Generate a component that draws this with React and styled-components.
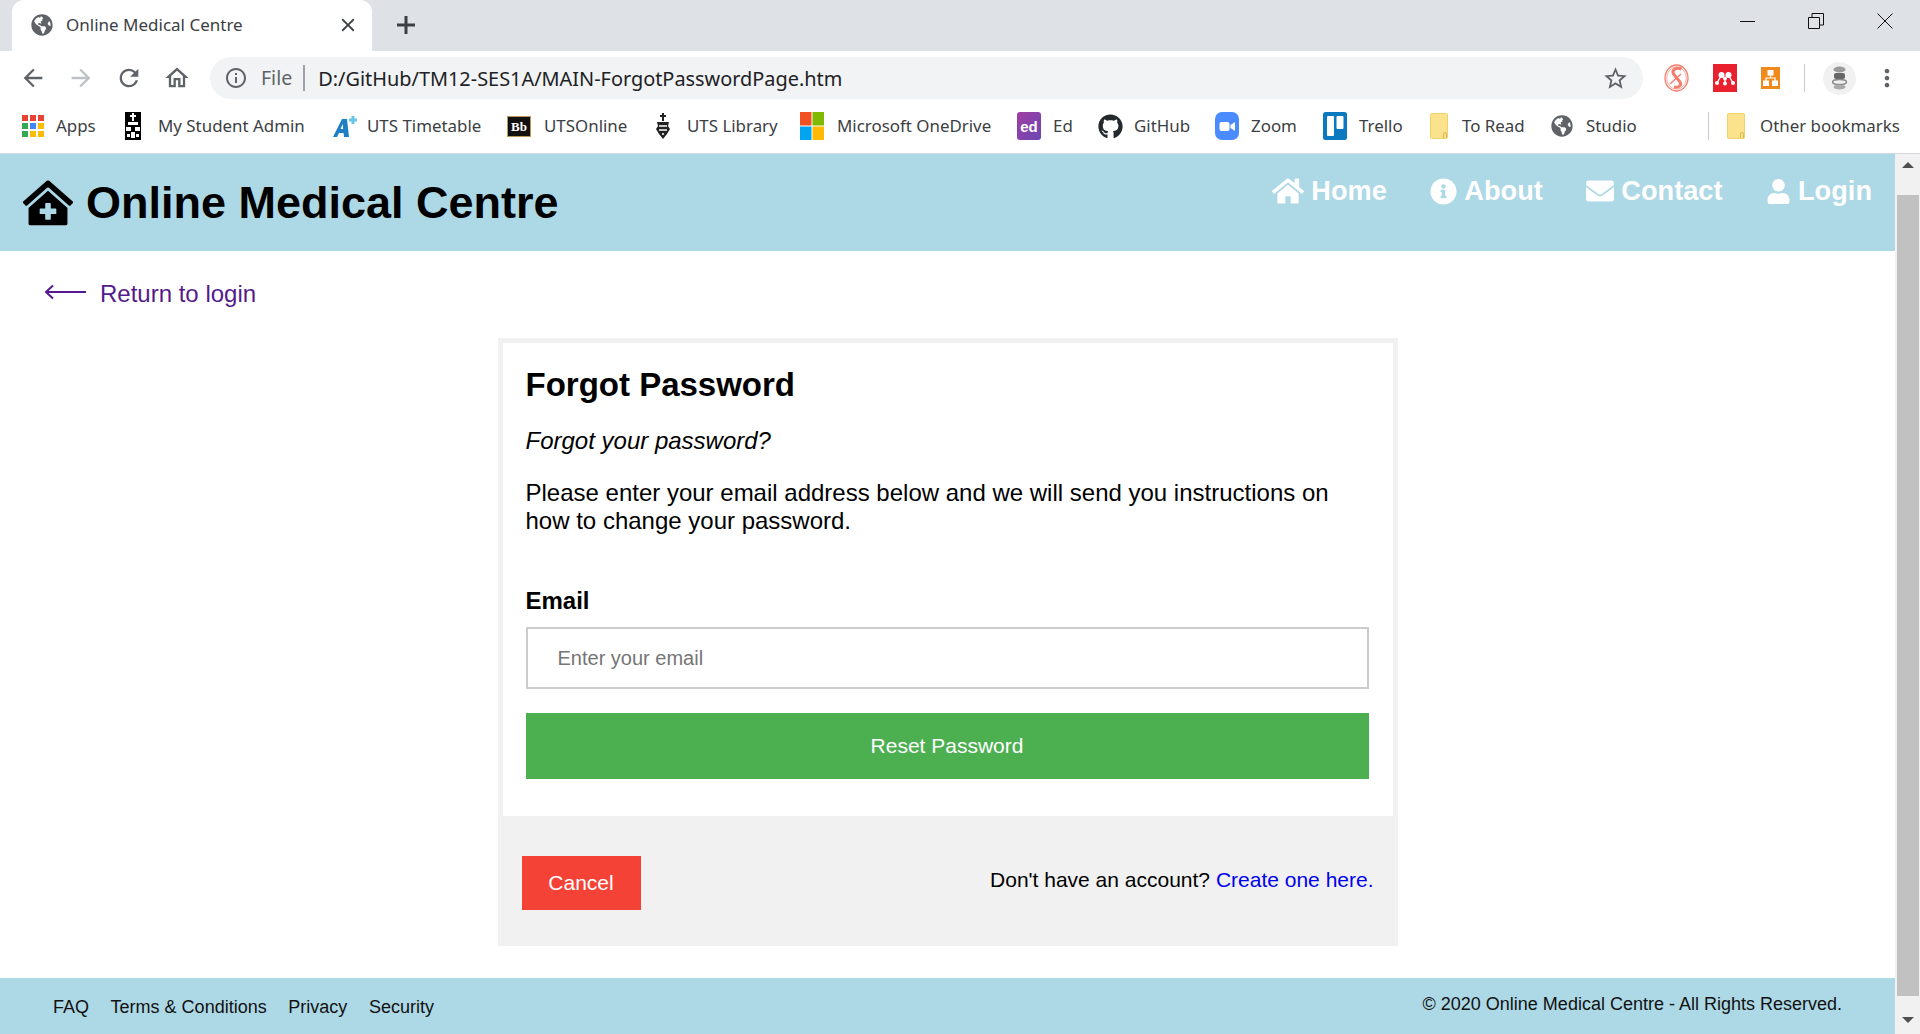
import React from "react";
import styled, { createGlobalStyle } from "styled-components";
import {
  FaClinicMedical,
  FaHome,
  FaInfoCircle,
  FaEnvelope,
  FaUser,
  FaGithub,
  FaGlobeAmericas,
} from "react-icons/fa";
import {
  MdArrowBack,
  MdArrowForward,
  MdRefresh,
  MdOutlineHome,
  MdInfoOutline,
  MdStarBorder,
  MdMoreVert,
  MdClose,
} from "react-icons/md";

const GlobalStyle = createGlobalStyle`
  html, body {
    margin: 0;
    height: 100%;
    overflow: hidden;
    background: #fff;
  }
  * { box-sizing: border-box; }
`;

const CHROME_FONT = `"Noto Sans", "Open Sans", sans-serif`;
const PAGE_FONT = `"Liberation Sans", Arial, sans-serif`;

const Shell = styled.div`
  display: flex;
  flex-direction: column;
  height: 1034px;
  overflow: hidden;
`;

/* browser chrome */
const TabStrip = styled.div`
  height: 51px;
  flex: none;
  display: flex;
  align-items: flex-end;
  background: #dee1e6;
  padding-left: 12px;
`;

const Tab = styled.div`
  width: 360px;
  height: 51px;
  display: flex;
  align-items: center;
  padding: 0 13px 2px 19px;
  background: #fff;
  border-radius: 12px 12px 0 0;
  font: 17px ${CHROME_FONT};
  color: #3c4043;
  svg { flex: none; }
`;

const TabTitle = styled.span`
  flex: 1;
  margin-left: 13px;
`;

const NewTab = styled.div`
  margin: 0 0 3px 24px;
  height: 46px;
  display: flex;
  align-items: center;
`;

const WindowControls = styled.div`
  margin-left: auto;
  height: 51px;
  display: flex;
  align-items: center;
  gap: 53px;
  padding: 0 27px 9px 0;
`;

const Toolbar = styled.div`
  height: 48px;
  flex: none;
  display: flex;
  align-items: flex-end;
  padding-left: 19px;
  background: #fff;
`;

const NavButtons = styled.div`
  display: flex;
  flex: none;
  align-items: center;
  gap: 20px;
  height: 42px;
  color: #5f6368;
`;

const Omnibox = styled.div`
  width: 1433px;
  height: 42px;
  flex: none;
  margin-left: 19px;
  display: flex;
  align-items: center;
  padding: 0 14px;
  background: #f1f3f4;
  border-radius: 21px;
  font: 20px ${CHROME_FONT};
  color: #5f6368;
`;

const Scheme = styled.span`
  margin-left: 13px;
  padding-right: 11px;
  border-right: 2px solid #9aa0a6;
  line-height: 26px;
  font-size: 19.5px;
`;

const Url = styled.span`
  flex: 1;
  margin-left: 13px;
  color: #202124;
  font-size: 19.9px;
`;

const Extensions = styled.div`
  display: flex;
  flex: none;
  align-items: center;
  height: 42px;
  margin-left: 21px;
  gap: 24px;
`;

const Divider = styled.div`
  width: 1px;
  height: ${(p) => p.$h}px;
  margin-right: ${(p) => p.$mr || 0}px;
  background: #c8cacd;
`;

const Avatar = styled.div`
  width: 33px;
  height: 33px;
  margin-left: -6px;
  border-radius: 50%;
  background: #f1f1f1;
  display: flex;
  align-items: center;
  justify-content: center;
`;

const MenuDots = styled(MdMoreVert)`
  margin-left: -7px;
  color: #5f6368;
`;

const Bookmarks = styled.div`
  height: 55px;
  flex: none;
  display: flex;
  align-items: center;
  padding-left: 22px;
  background: #fff;
  border-bottom: 1px solid #d5d8dc;
  font: 16.9px ${CHROME_FONT};
  color: #3c4043;
`;

const Bookmark = styled.div`
  width: ${(p) => p.$w}px;
  flex: none;
  display: flex;
  align-items: center;
  white-space: nowrap;
`;

const BookmarkIcon = styled.div`
  width: ${(p) => p.$w}px;
  flex: none;
  height: 26px;
  display: flex;
  align-items: center;
`;

const BookmarkLabel = styled.span`
  margin-top: -2px;
`;

/* page */
const Viewport = styled.div`
  flex: 1;
  min-height: 0;
  display: flex;
`;

const Page = styled.div`
  flex: 1;
  min-width: 0;
  display: flex;
  flex-direction: column;
  background: #fff;
  font-family: ${PAGE_FONT};
  color: #000;
`;

const Header = styled.header`
  height: 97px;
  flex: none;
  display: flex;
  justify-content: space-between;
  padding: 0 23px 0 23px;
  background: #add8e6;
`;

const Brand = styled.h1`
  margin: 0;
  display: flex;
  align-items: center;
  gap: 13px;
  font-size: 45px;
  font-weight: bold;
  line-height: 97px;
`;

const NavLinks = styled.nav`
  display: flex;
  gap: 43.5px;
  padding-top: 18px;
`;

const NavLink = styled.a`
  display: flex;
  align-items: center;
  gap: 7px;
  height: 38px;
  color: #fff;
  font-size: 27.2px;
  font-weight: bold;
`;

const ReturnLink = styled.a`
  display: flex;
  align-items: center;
  gap: 14px;
  margin: 29px 0 0 44px;
  height: 28px;
  color: #551a8b;
  font-size: 24px;
  svg { margin-bottom: 4px; }
`;

const Card = styled.section`
  width: 900px;
  margin: 30px auto 0;
  background: #f1f1f1;
  padding: 5px 5px 0;
`;

const CardBody = styled.div`
  height: 473px;
  padding: 23px 24px 0 23px;
  background: #fff;
`;

const Title = styled.h2`
  margin: 0;
  font-size: 33px;
  line-height: 38px;
  font-weight: bold;
`;

const Lead = styled.p`
  margin: 23px 0 0;
  font-size: 24px;
  line-height: 28px;
  font-style: italic;
`;

const Instructions = styled.p`
  margin: 24px 0 0;
  font-size: 24px;
  line-height: 28px;
`;

const Label = styled.label`
  display: block;
  margin-top: 52px;
  font-size: 24px;
  line-height: 28px;
  font-weight: bold;
`;

const EmailInput = styled.input`
  display: block;
  width: 100%;
  height: 62px;
  margin-top: 12px;
  padding: 0 30px;
  border: 2px solid #ccc;
  border-radius: 0;
  outline: none;
  font: 20px ${PAGE_FONT};
  &::placeholder { color: #757575; opacity: 1; }
`;

const ResetButton = styled.button`
  display: block;
  width: 100%;
  height: 66px;
  margin-top: 24px;
  border: none;
  background: #4caf50;
  color: #fff;
  font: 21px ${PAGE_FONT};
`;

const CardFooter = styled.div`
  height: 130px;
  margin: 0 -5px;
  display: flex;
  align-items: flex-start;
  justify-content: space-between;
  padding: 40px 24px 0 24px;
  background: #f1f1f1;
`;

const CancelButton = styled.button`
  width: 119px;
  height: 54px;
  border: none;
  background: #f44336;
  color: #fff;
  font: 21px ${PAGE_FONT};
`;

const SignupNote = styled.span`
  margin-top: 11px;
  font-size: 21px;
  line-height: 26px;
  a { color: #0000ee; }
`;

const Footer = styled.footer`
  height: 56px;
  margin-top: auto;
  flex: none;
  display: flex;
  justify-content: space-between;
  padding: 0 53px;
  background: #add8e6;
  color: #111;
`;

const FooterLinks = styled.div`
  display: flex;
  gap: 21.6px;
  padding-top: 19px;
  font-size: 18px;
  line-height: 21px;
`;

const Copyright = styled.div`
  padding-top: 16px;
  font-size: 18px;
  line-height: 21px;
`;

const Scrollbar = styled.div`
  width: 25px;
  flex: none;
  display: flex;
  flex-direction: column;
  background: #f1f1f1;
`;

const ScrollArrow = styled.div`
  height: ${(p) => (p.$down ? 38 : 41)}px;
  flex: none;
  display: flex;
  align-items: ${(p) => (p.$down ? "flex-end" : "flex-start")};
  justify-content: center;
  padding: ${(p) => (p.$down ? "0 0 11px" : "8px 0 0")};
  &::after {
    content: "";
    border-left: 6px solid transparent;
    border-right: 6px solid transparent;
    ${(p) => (p.$down ? "border-top: 6px solid #505050;" : "border-bottom: 6px solid #505050;")}
  }
`;

const ScrollThumb = styled.div`
  flex: 1;
  margin: 0 1px 0 2px;
  background: #c1c1c1;
`;

/* small drawings */
const WinIcon = ({ kind }) => (
  <svg width="16" height="16" viewBox="0 0 16 16" fill="none" stroke="#111" strokeWidth="1">
    {kind === "min" && <path d="M1 8.5h16" />}
    {kind === "max" && <path d="M.5 4.5h11v11H.5zM4 4V.5h11.5V12H12" />}
    {kind === "close" && <path d="M.5.5l15 15M15.5.5l-15 15" />}
  </svg>
);

const PlusIcon = () => (
  <svg width="20" height="20" viewBox="0 0 20 20" stroke="#3c4043" strokeWidth="3">
    <path d="M10 1v18M1 10h18" />
  </svg>
);

const AppsIcon = () => (
  <svg width="22" height="22" viewBox="0 0 22 22">
    {["#ea4335", "#ea4335", "#ea4335", "#34a853", "#4285f4", "#fbbc05", "#34a853", "#fbbc05", "#fbbc05"].map((c, i) => (
      <rect key={i} x={(i % 3) * 8} y={Math.floor(i / 3) * 8} width="6" height="6" fill={c} />
    ))}
  </svg>
);

const CrestIcon = () => (
  <svg width="16" height="28" viewBox="0 0 16 28">
    <rect width="16" height="28" fill="#000" />
    <path d="M8 1v8M5 4h6" stroke="#fff" strokeWidth="2" />
    <path d="M3 10h10v3H3zM1 15h5v4H1zM10 15h5v4h-5zM6 20h4v6H6zM2 22h3v3H2zM11 22h3v3h-3z" fill="#fff" />
  </svg>
);

const LibraryIcon = () => (
  <svg width="16" height="28" viewBox="0 0 16 28">
    <path d="M8 1v8M5 4h6" stroke="#222" strokeWidth="2" />
    <path d="M2 10h12l-1 4 2 3-3 5-4 5-4-5-3-5 2-3z" fill="#222" />
    <path d="M4 14h8M4 18h8M7 22h2" stroke="#fff" strokeWidth="1.5" />
  </svg>
);

const TimetableIcon = () => (
  <svg width="25" height="24" viewBox="0 0 25 24">
    <path d="M1 23L10 5h5l2 18h-5l-.4-4H7l-2 4zM8.6 15h2.6l-.4-5z" fill="#1f7fc4" />
    <path d="M17 6h8M21 2v8" stroke="#69c5e8" strokeWidth="3" />
  </svg>
);

const BbIcon = () => (
  <svg width="24" height="21" viewBox="0 0 24 21">
    <rect x="0.5" y="0.5" width="23" height="20" fill="#111" stroke="#b5985a" />
    <text x="12" y="15" textAnchor="middle" fontFamily="Liberation Serif" fontWeight="bold" fontSize="13" fill="#fff">Bb</text>
  </svg>
);

const MsIcon = () => (
  <svg width="24" height="28" viewBox="0 0 24 28">
    <rect width="11.5" height="13.5" fill="#f25022" />
    <rect x="12.5" width="11.5" height="13.5" fill="#7fba00" />
    <rect y="14.5" width="11.5" height="13.5" fill="#00a4ef" />
    <rect x="12.5" y="14.5" width="11.5" height="13.5" fill="#ffb900" />
  </svg>
);

const EdIcon = () => (
  <svg width="24" height="28" viewBox="0 0 24 28">
    <defs>
      <linearGradient id="edg" x1="0" y1="0" x2="1" y2="1">
        <stop offset="0" stopColor="#a33ea1" />
        <stop offset="1" stopColor="#6a46b5" />
      </linearGradient>
    </defs>
    <rect width="24" height="28" rx="3" fill="url(#edg)" />
    <text x="12" y="20" textAnchor="middle" fontFamily="Liberation Sans" fontWeight="bold" fontSize="15" fill="#fff">ed</text>
  </svg>
);

const ZoomIcon = () => (
  <svg width="24" height="28" viewBox="0 0 24 28">
    <rect width="24" height="28" rx="7" fill="#4a8cff" />
    <rect x="4.5" y="10" width="10" height="9" rx="2" fill="#fff" />
    <path d="M15.5 13l4.5-3v9l-4.5-3z" fill="#fff" />
  </svg>
);

const TrelloIcon = () => (
  <svg width="24" height="28" viewBox="0 0 24 28">
    <rect width="24" height="28" rx="2.5" fill="#0a79bf" />
    <rect x="4" y="4" width="7" height="20" rx="1" fill="#fff" />
    <rect x="13.5" y="4" width="7" height="13" rx="1" fill="#fff" />
  </svg>
);

const FolderIcon = () => (
  <svg width="18" height="26" viewBox="0 0 18 26">
    <rect x="0.5" y="0.5" width="17" height="25" rx="1" fill="#fbe38e" stroke="#efd26a" />
    <path d="M13.5 25v-4a1.5 1.5 0 0 1 3 0v4" fill="none" stroke="#d9b84f" />
  </svg>
);

const StudentExt = () => (
  <svg width="25" height="28" viewBox="0 0 25 28" fill="none" stroke="#f47c6c" strokeWidth="1.3">
    <ellipse cx="12.5" cy="14" rx="11.5" ry="13" />
    <ellipse cx="12.5" cy="14" rx="9.8" ry="11.2" strokeWidth="0.6" />
    <path d="M17.5 5c-6-2-10 1-8 5l6.5 8c2 3-1 6-6 5" strokeWidth="3" />
    <path d="M6 20l11-10" />
  </svg>
);

const MendeleyExt = () => (
  <svg width="24" height="28" viewBox="0 0 24 28">
    <rect width="24" height="28" fill="#e9212f" />
    <circle cx="8.5" cy="11" r="3" fill="#fff" />
    <circle cx="15.5" cy="11" r="3" fill="#fff" />
    <circle cx="12" cy="14.5" r="2" fill="#fff" />
    <circle cx="4" cy="19" r="2" fill="#fff" />
    <circle cx="12" cy="19.5" r="2" fill="#fff" />
    <circle cx="20" cy="19" r="2" fill="#fff" />
    <path d="M8 12l-4 7M16 12l4 7M12 14v5" stroke="#fff" strokeWidth="1.4" />
  </svg>
);

const DrawioExt = () => (
  <svg width="19" height="22" viewBox="0 0 19 22">
    <rect width="19" height="22" fill="#f08a1d" />
    <rect x="6.5" y="3" width="6" height="5.5" fill="#fff" />
    <rect x="2" y="13.5" width="6" height="5.5" fill="#fff" />
    <rect x="11" y="13.5" width="6" height="5.5" fill="#fff" />
    <path d="M9.5 8v3M5 14v-3h9v3" stroke="#fff" strokeWidth="1.2" fill="none" />
  </svg>
);

const AvatarFace = () => (
  <svg width="15" height="24" viewBox="0 0 15 24">
    <ellipse cx="7.5" cy="3.5" rx="6" ry="3" fill="#9a9a9a" />
    <rect x="2" y="7" width="11" height="6" rx="2" fill="#666" />
    <ellipse cx="7.5" cy="16" rx="7" ry="2.5" fill="none" stroke="#888" strokeWidth="1.5" />
    <ellipse cx="7.5" cy="21" rx="6" ry="2.5" fill="#aaa" />
  </svg>
);

const LongArrow = () => (
  <svg width="42" height="16" viewBox="0 0 42 16" fill="none" stroke="#551a8b" strokeWidth="2">
    <path d="M42 8H2M9 1.5L2 8l7 6.5" />
  </svg>
);

const bookmarks = [
  { label: "Apps", icon: <AppsIcon />, iconW: 34, w: 103 },
  { label: "My Student Admin", icon: <CrestIcon />, iconW: 33, w: 207 },
  { label: "UTS Timetable", icon: <TimetableIcon />, iconW: 35, w: 175 },
  { label: "UTSOnline", icon: <BbIcon />, iconW: 37, w: 148 },
  { label: "UTS Library", icon: <LibraryIcon />, iconW: 32, w: 145 },
  { label: "Microsoft OneDrive", icon: <MsIcon />, iconW: 37, w: 217 },
  { label: "Ed", icon: <EdIcon />, iconW: 36, w: 81 },
  { label: "GitHub", icon: <FaGithub size={25} color="#24292e" />, iconW: 36, w: 117 },
  { label: "Zoom", icon: <ZoomIcon />, iconW: 36, w: 108 },
  { label: "Trello", icon: <TrelloIcon />, iconW: 36, w: 107 },
  { label: "To Read", icon: <FolderIcon />, iconW: 32, w: 121 },
  { label: "Studio", icon: <FaGlobeAmericas size={22} color="#5f6368" />, iconW: 35, w: 157 },
];

export default function App() {
  return (
    <>
      <GlobalStyle />
      <Shell>
        <TabStrip>
          <Tab>
            <FaGlobeAmericas size={22} color="#5f6368" />
            <TabTitle>Online Medical Centre</TabTitle>
            <MdClose size={22} color="#3c4043" />
          </Tab>
          <NewTab>
            <PlusIcon />
          </NewTab>
          <WindowControls>
            <WinIcon kind="min" />
            <WinIcon kind="max" />
            <WinIcon kind="close" />
          </WindowControls>
        </TabStrip>

        <Toolbar>
          <NavButtons>
            <MdArrowBack size={28} />
            <MdArrowForward size={28} color="#bdc1c6" />
            <MdRefresh size={28} />
            <MdOutlineHome size={28} />
          </NavButtons>
          <Omnibox>
            <MdInfoOutline size={24} />
            <Scheme>File</Scheme>
            <Url>D:/GitHub/TM12-SES1A/MAIN-ForgotPasswordPage.htm</Url>
            <MdStarBorder size={27} />
          </Omnibox>
          <Extensions>
            <StudentExt />
            <MendeleyExt />
            <DrawioExt />
            <Divider $h={28} />
            <Avatar>
              <AvatarFace />
            </Avatar>
            <MenuDots size={28} />
          </Extensions>
        </Toolbar>

        <Bookmarks>
          {bookmarks.map((b) => (
            <Bookmark key={b.label} $w={b.w}>
              <BookmarkIcon $w={b.iconW}>{b.icon}</BookmarkIcon>
              <BookmarkLabel>{b.label}</BookmarkLabel>
            </Bookmark>
          ))}
          <Divider $h={28} $mr={18} />
          <Bookmark $w={190}>
            <BookmarkIcon $w={33}>
              <FolderIcon />
            </BookmarkIcon>
            <BookmarkLabel>Other bookmarks</BookmarkLabel>
          </Bookmark>
        </Bookmarks>

        <Viewport>
          <Page>
            <Header>
              <Brand>
                <FaClinicMedical size={50} />
                Online Medical Centre
              </Brand>
              <NavLinks>
                <NavLink><FaHome size={32} />Home</NavLink>
                <NavLink><FaInfoCircle size={27} />About</NavLink>
                <NavLink><FaEnvelope size={28} />Contact</NavLink>
                <NavLink><FaUser size={25} />Login</NavLink>
              </NavLinks>
            </Header>

            <ReturnLink>
              <LongArrow />
              Return to login
            </ReturnLink>

            <Card>
              <CardBody>
                <Title>Forgot Password</Title>
                <Lead>Forgot your password?</Lead>
                <Instructions>
                  Please enter your email address below and we will send you instructions on how to change your password.
                </Instructions>
                <Label htmlFor="email">Email</Label>
                <EmailInput id="email" type="text" placeholder="Enter your email" />
                <ResetButton>Reset Password</ResetButton>
              </CardBody>
              <CardFooter>
                <CancelButton>Cancel</CancelButton>
                <SignupNote>
                  Don't have an account? <a>Create one here.</a>
                </SignupNote>
              </CardFooter>
            </Card>

            <Footer>
              <FooterLinks>
                <span>FAQ</span>
                <span>Terms &amp; Conditions</span>
                <span>Privacy</span>
                <span>Security</span>
              </FooterLinks>
              <Copyright>© 2020 Online Medical Centre - All Rights Reserved.</Copyright>
            </Footer>
          </Page>
          <Scrollbar>
            <ScrollArrow />
            <ScrollThumb />
            <ScrollArrow $down />
          </Scrollbar>
        </Viewport>
      </Shell>
    </>
  );
}
